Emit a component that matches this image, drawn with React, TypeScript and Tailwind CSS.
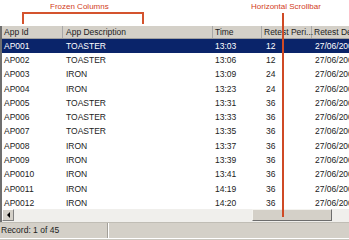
import React from "react";

const rows: [string, string, string, string][] = [
  ["AP001", "TOASTER", "13:03", "12"],
  ["AP002", "TOASTER", "13:06", "12"],
  ["AP003", "IRON", "13:09", "24"],
  ["AP004", "IRON", "13:23", "24"],
  ["AP005", "TOASTER", "13:31", "36"],
  ["AP006", "TOASTER", "13:33", "36"],
  ["AP007", "TOASTER", "13:35", "36"],
  ["AP008", "IRON", "13:37", "36"],
  ["AP009", "IRON", "13:39", "36"],
  ["AP0010", "IRON", "13:41", "36"],
  ["AP0011", "IRON", "14:19", "36"],
  ["AP0012", "IRON", "14:20", "36"],
];

export default function App() {
  return (
    <div
      className="relative w-[349px] h-[240px] bg-white overflow-hidden flex flex-col text-[8.5px] leading-none text-[#222]"
      style={{ fontFamily: '"Liberation Sans", Arial, sans-serif' }}
    >
      <div className="h-[26px] shrink-0" />
      <div className="flex-1 flex flex-col border-l-2 border-[#6f6f6f] overflow-hidden">
        {/* header */}
        <div className="h-[13px] shrink-0 flex bg-[#d4d0c8] border-b border-[#a0a0a0] whitespace-nowrap overflow-hidden">
          <div className="w-[61px] shrink-0 flex items-center pl-[2px] border-r border-[#a8a8a8]">App Id</div>
          <div className="w-[150px] shrink-0 flex items-center pl-[3px] border-r border-[#a8a8a8]">App Description</div>
          <div className="w-[49px] shrink-0 flex items-center pl-[2px] border-r border-[#a8a8a8]">Time</div>
          <div className="w-[50px] shrink-0 flex items-center pl-[2px] border-r border-[#a8a8a8]">Retest Peri...</div>
          <div className="shrink-0 flex items-center pl-[2px]">Retest De</div>
        </div>
        {/* rows */}
        <div className="flex-1 flex flex-col overflow-hidden">
          {rows.map((r, i) => (
            <div
              key={r[0]}
              className={
                "h-[14.27px] shrink-0 flex items-center whitespace-nowrap " +
                (i === 0 ? "bg-[#0a246a] text-white" : "")
              }
            >
              <div className="w-[61px] shrink-0 pl-[2px]">{r[0]}</div>
              <div className="w-[150px] shrink-0 pl-[3px]">{r[1]}</div>
              <div className="w-[49px] shrink-0 pl-[2px]">{r[2]}</div>
              <div className="w-[50px] shrink-0 pl-[4px]">{r[3]}</div>
              <div className="shrink-0 pl-[3px]">27/06/2007</div>
            </div>
          ))}
        </div>
        {/* scrollbar */}
        <div className="h-[13px] shrink-0 flex bg-[#f0efec]">
          <div className="w-[12px] h-[12px] bg-[#d4d0c8] border-t border-l border-white border-r border-b border-r-[#808080] border-b-[#808080] flex items-center justify-center">
            <div className="w-0 h-0 border-y-[3px] border-y-transparent border-r-[3px] border-r-black" />
          </div>
          <div className="w-[238px] shrink-0" />
          <div className="w-[80px] h-[12px] shrink-0 bg-[#d4d0c8] border-t border-l border-[#f4f3ef] border-r border-b border-r-[#6d6d6d] border-b-[#6d6d6d]" />
        </div>
      </div>
      {/* status bar */}
      <div className="h-[18px] shrink-0 bg-[#d4d0c8] border-t border-[#c0bdb5] flex flex-col">
        <div className="flex-1 flex">
          <div className="w-[108px] flex items-center pl-[1px] text-[8.5px] text-[#222] border-r border-[#a29f98]">
            Record: 1 of 45
          </div>
          <div className="w-px bg-white" />
          <div className="flex-1" />
        </div>
        <div className="h-[2px] border-t border-white bg-[#c9c6be]" />
      </div>

      {/* annotations */}
      <div className="absolute left-[50px] top-[3px] text-[8px] text-[#d23d1c] whitespace-nowrap">Frozen Columns</div>
      <div className="absolute left-[22px] top-[12px] w-[122px] h-[12px] border-t-2 border-l-2 border-r-2 border-[#d4532e]" />
      <div className="absolute left-[251px] top-[3px] text-[8px] text-[#d23d1c] whitespace-nowrap">Horizontal Scrollbar</div>
      <div className="absolute left-[282px] top-[13px] w-[2px] h-[204px] bg-[#cf4a25]" />
    </div>
  );
}
